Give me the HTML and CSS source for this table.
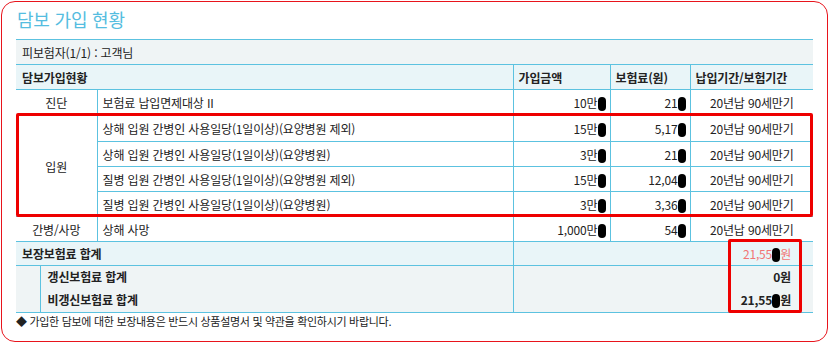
FILE: index.html
```html
<!DOCTYPE html>
<html lang="ko">
<head>
<meta charset="utf-8">
<title>담보 가입 현황</title>
<link rel="stylesheet" href="styles.css">
</head>
<body>
<div class="panel">
  <h2 class="title">담보 가입 현황</h2>
  <div class="tablewrap">
    <table class="cov">
      <colgroup>
        <col class="c1"><col class="c2"><col class="c3"><col class="c4"><col class="c5">
      </colgroup>
      <tr class="insured r25"><td colspan="5" class="lbl">피보험자(1/1) : 고객님</td></tr>
      <tr class="head r25">
        <th colspan="2" class="lbl">담보가입현황</th>
        <th class="hl">가입금액</th>
        <th class="hl">보험료(원)</th>
        <th class="hl">납입기간/보험기간</th>
      </tr>
      <tr class="r26">
        <td class="cat">진단</td>
        <td class="desc">보험료 납입면제대상 II</td>
        <td class="num">10만<span class="rd"></span></td>
        <td class="num">21<span class="rd"></span></td>
        <td class="per">20년납 90세만기</td>
      </tr>
      <tr class="r26">
        <td class="cat" rowspan="4">입원</td>
        <td class="desc">상해 입원 간병인 사용일당(1일이상)(요양병원 제외)</td>
        <td class="num">15만<span class="rd"></span></td>
        <td class="num">5,17<span class="rd"></span></td>
        <td class="per">20년납 90세만기</td>
      </tr>
      <tr class="r25">
        <td class="desc">상해 입원 간병인 사용일당(1일이상)(요양병원)</td>
        <td class="num">3만<span class="rd"></span></td>
        <td class="num">21<span class="rd"></span></td>
        <td class="per">20년납 90세만기</td>
      </tr>
      <tr class="r25">
        <td class="desc">질병 입원 간병인 사용일당(1일이상)(요양병원 제외)</td>
        <td class="num">15만<span class="rd"></span></td>
        <td class="num">12,04<span class="rd"></span></td>
        <td class="per">20년납 90세만기</td>
      </tr>
      <tr class="r25">
        <td class="desc">질병 입원 간병인 사용일당(1일이상)(요양병원)</td>
        <td class="num">3만<span class="rd"></span></td>
        <td class="num">3,36<span class="rd"></span></td>
        <td class="per">20년납 90세만기</td>
      </tr>
      <tr class="r25">
        <td class="cat">간병/사망</td>
        <td class="desc">상해 사망</td>
        <td class="num">1,000만<span class="rd"></span></td>
        <td class="num">54<span class="rd"></span></td>
        <td class="per">20년납 90세만기</td>
      </tr>
    </table>
    <table class="tot">
      <colgroup>
        <col class="t1"><col class="t2"><col class="t3">
      </colgroup>
      <tr class="sum">
        <th colspan="2" class="lbl">보장보험료 합계</th>
        <td class="val pink">21,55<span class="rd"></span>원</td>
      </tr>
      <tr class="sub top">
        <td rowspan="2" class="indent"></td>
        <th class="slbl">갱신보험료 합계</th>
        <td class="val b">0원</td>
      </tr>
      <tr class="sub bot">
        <th class="slbl">비갱신보험료 합계</th>
        <td class="val b">21,55<span class="rd"></span>원</td>
      </tr>
    </table>
    <div class="mark mark-rows"></div>
    <div class="mark mark-sum"></div>
  </div>
  <p class="note">◆ 가입한 담보에 대한 보장내용은 반드시 상품설명서 및 약관을 확인하시기 바랍니다.</p>
</div>
</body>
</html>
```

FILE: styles.css
```css
* { box-sizing: border-box; }
html, body { margin: 0; padding: 0; background: #fff; }
body {
  font-family: "Noto Sans CJK KR", "Noto Sans", sans-serif;
  color: #222;
  font-size: 12px;
}
.panel {
  margin: 1px 1px 0 1px;
  height: 341px;
  border: 1px solid #e8141c;
  border-radius: 14px;
  padding: 0 13px 0 14px;
}
.title {
  margin: 5px 0 0 1px;
  font-size: 18px;
  line-height: 24px;
  font-weight: normal;
  color: #55bde0;
  letter-spacing: -0.2px;
}
.tablewrap {
  position: relative;
  margin-top: 8px;
  width: 797px;
}
table { border-collapse: collapse; width: 797px; table-layout: fixed; }
td, th { padding: 0; font-weight: normal; white-space: nowrap; letter-spacing: -0.15px; }
.c1 { width: 81px; } .c2 { width: 416px; } .c3 { width: 97px; } .c4 { width: 80px; } .c5 { width: 123px; }
.cov td, .cov th { border: 1px solid #5cc2e0; }
.cov tr td:first-child, .cov tr th:first-child { border-left: none; }
.cov td:last-child, .cov th:last-child { border-right: none; }
.cov td.cat { border-left: none; }
.r25 td, .r25 th { height: 25px; }
.r26 td, .r26 th { height: 26px; }
.insured td { background: #eff4f5; text-align: left; padding-left: 6px; }
.head th { background: #e9f5f8; font-weight: bold; text-align: left; }
.head th.lbl { padding-left: 6px; }
.head th.hl { padding-left: 5px; }
.cat { text-align: center; }
.desc { padding-left: 5px; text-align: left; }
.num { text-align: right; padding-right: 4px; }
.per { text-align: center; }
.rd {
  display: inline-block;
  width: 8px;
  height: 14px;
  background: #000;
  border-radius: 4px;
  vertical-align: -3px;
  margin-left: 0;
}
.t1 { width: 24px; } .t2 { width: 473px; } .t3 { width: 300px; }
.tot td, .tot th { border: 0 solid #5cc2e0; }
.tot .sum th, .tot .sum td { height: 23px; background: #e9f5f8; border-bottom: 1px solid #5cc2e0; }
.tot .sum th { font-weight: bold; text-align: left; padding-left: 6px; }
.tot .sum td { border-left: 1px solid #5cc2e0; }
.tot .sub td, .tot .sub th { background: #eff4f5; }
.tot .sub.top td, .tot .sub.top th { height: 23px; }
.tot .sub.bot td, .tot .sub.bot th { height: 24px; border-bottom: 1px solid #5cc2e0; }
.tot .indent { border-right: 1px solid #5cc2e0; border-bottom: 1px solid #5cc2e0; }
.tot .slbl { font-weight: bold; text-align: left; padding-left: 7px; }
.tot .sub td.val { border-left: 1px solid #5cc2e0; }
.val { text-align: right; padding-right: 22px; }
.val.b { font-weight: bold; }
.pink { color: #f27474; }
.mark { position: absolute; border: 3px solid #ee0000; border-radius: 2px; pointer-events: none; }
.mark-rows { left: 0; top: 74px; width: 797px; height: 104px; }
.mark-sum { left: 712px; top: 200px; width: 74px; height: 74px; }
.note { margin: 0; line-height: 17px; font-size: 11px; letter-spacing: -0.3px; }
```
